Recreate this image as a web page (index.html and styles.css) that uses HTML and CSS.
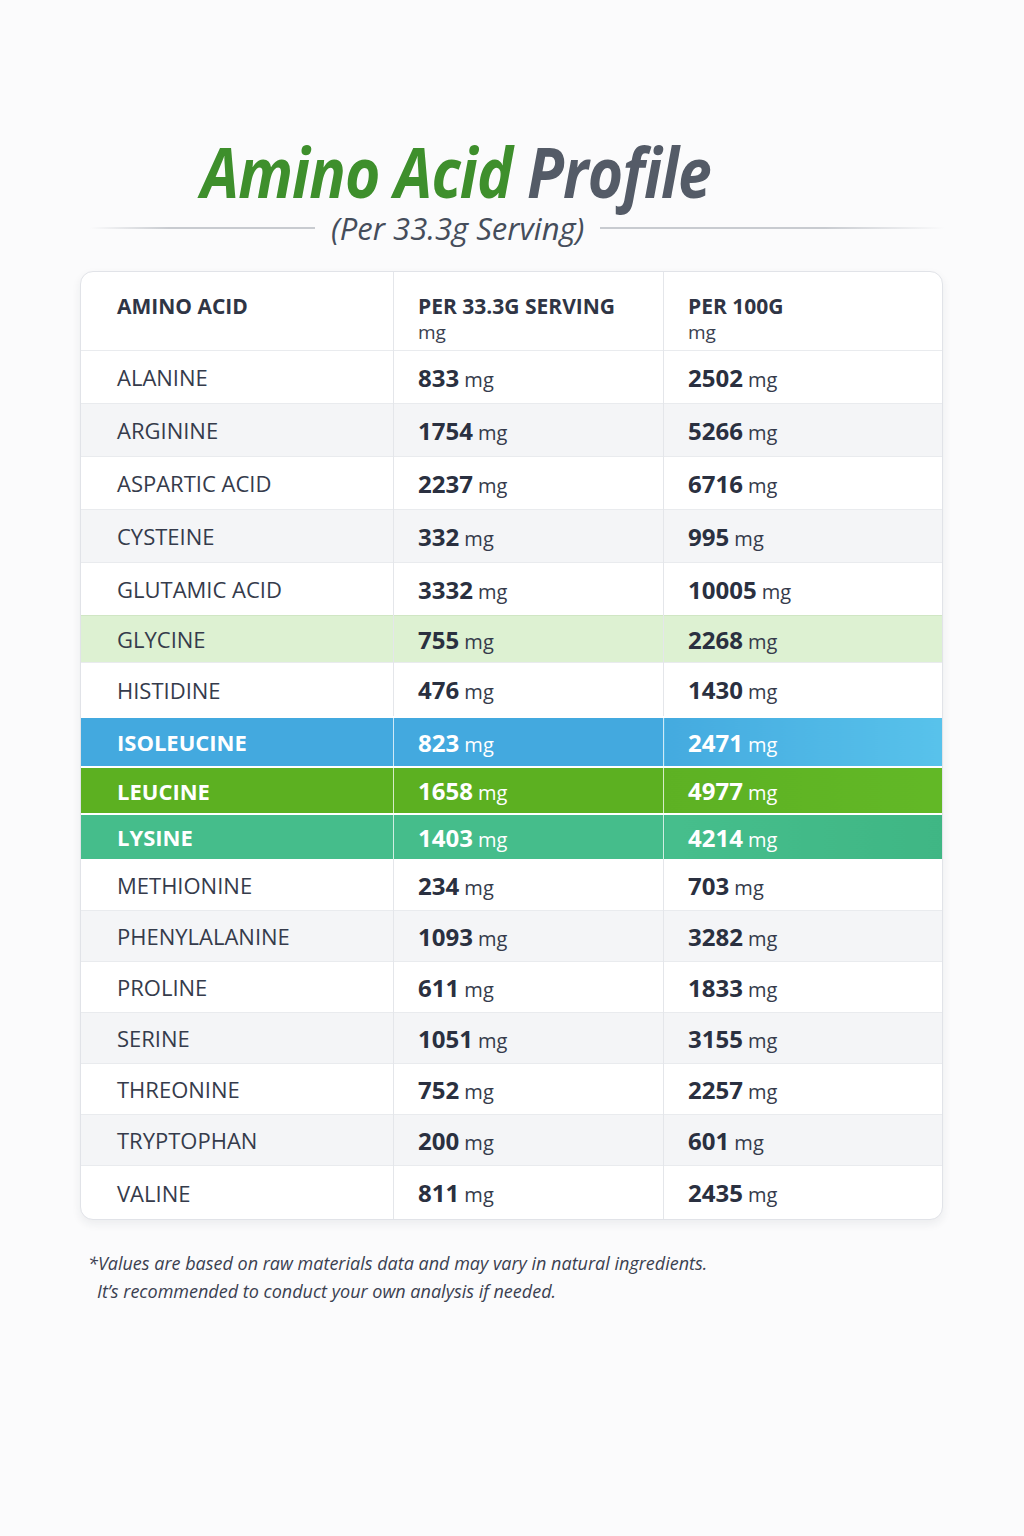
FILE: index.html
```html
<!DOCTYPE html>
<html lang="en">
<head>
<meta charset="utf-8">
<title>Amino Acid Profile</title>
<link rel="stylesheet" href="styles.css">
</head>
<body>
<main class="page">
  <header class="heading">
    <h1 class="title"><span class="green">Amino Acid</span> <span class="gray">Profile</span></h1>
    <div class="subtitle-row">
      <span class="rule rule-left"></span>
      <span class="subtitle">(Per 33.3g Serving)</span>
      <span class="rule rule-right"></span>
    </div>
  </header>

  <div class="card">
    <table class="amino">
      <thead>
        <tr>
          <th class="c1">AMINO ACID</th>
          <th class="c2">PER 33.3G SERVING<span class="unit">mg</span></th>
          <th class="c3">PER 100G<span class="unit">mg</span></th>
        </tr>
      </thead>
      <tbody>
        <tr class="top"><td>ALANINE</td><td><b>833</b> mg</td><td><b>2502</b> mg</td></tr>
        <tr class="top alt"><td>ARGININE</td><td><b>1754</b> mg</td><td><b>5266</b> mg</td></tr>
        <tr class="top"><td>ASPARTIC ACID</td><td><b>2237</b> mg</td><td><b>6716</b> mg</td></tr>
        <tr class="top alt"><td>CYSTEINE</td><td><b>332</b> mg</td><td><b>995</b> mg</td></tr>
        <tr class="top"><td>GLUTAMIC ACID</td><td><b>3332</b> mg</td><td><b>10005</b> mg</td></tr>
        <tr class="glycine"><td>GLYCINE</td><td><b>755</b> mg</td><td><b>2268</b> mg</td></tr>
        <tr class="tall"><td>HISTIDINE</td><td><b>476</b> mg</td><td><b>1430</b> mg</td></tr>
        <tr class="hl iso"><td>ISOLEUCINE</td><td><b>823</b> mg</td><td><b>2471</b> mg</td></tr>
        <tr class="hl leu"><td>LEUCINE</td><td><b>1658</b> mg</td><td><b>4977</b> mg</td></tr>
        <tr class="hl lys"><td>LYSINE</td><td><b>1403</b> mg</td><td><b>4214</b> mg</td></tr>
        <tr><td>METHIONINE</td><td><b>234</b> mg</td><td><b>703</b> mg</td></tr>
        <tr class="alt"><td>PHENYLALANINE</td><td><b>1093</b> mg</td><td><b>3282</b> mg</td></tr>
        <tr><td>PROLINE</td><td><b>611</b> mg</td><td><b>1833</b> mg</td></tr>
        <tr class="alt"><td>SERINE</td><td><b>1051</b> mg</td><td><b>3155</b> mg</td></tr>
        <tr><td>THREONINE</td><td><b>752</b> mg</td><td><b>2257</b> mg</td></tr>
        <tr class="alt"><td>TRYPTOPHAN</td><td><b>200</b> mg</td><td><b>601</b> mg</td></tr>
        <tr class="last"><td>VALINE</td><td><b>811</b> mg</td><td><b>2435</b> mg</td></tr>
      </tbody>
    </table>
  </div>

  <p class="note">*Values are based on raw materials data and may vary in natural ingredients.<br><span class="indent">It’s recommended to conduct your own analysis if needed.</span></p>
</main>
</body>
</html>
```

FILE: styles.css
```css
html, body {
  margin: 0;
  padding: 0;
}
body {
  background: #fbfbfc;
  font-family: "Open Sans", "Noto Sans", "Liberation Sans", sans-serif;
  color: #2c3242;
  width: 1024px;
  min-height: 1536px;
}
.page {
  padding: 126px 81px 0 80px;
}
.heading {
  display: flex;
  flex-direction: column;
  align-items: stretch;
}
.title {
  margin: 0 0 0 121px;
  padding-top: 9px;
  font-size: 70px;
  line-height: 72px;
  font-weight: 700;
  font-style: italic;
  letter-spacing: -1px;
  font-stretch: 92%;
  white-space: nowrap;
  transform: scaleX(0.865);
  transform-origin: left center;
}
.title .green { color: #3e8f2c; }
.title .gray { color: #545b67; }
.subtitle-row {
  display: flex;
  align-items: center;
  gap: 16px;
  margin: 4px -2px 0 10px;
  height: 34px;
}
.rule {
  height: 2px;
}
.rule-left {
  width: 225px;
  background: linear-gradient(90deg, rgba(200,203,208,0), #c8cbd0 35%, #c8cbd0);
}
.rule-right {
  flex: 1;
  background: linear-gradient(90deg, #c8cbd0, #c8cbd0 65%, rgba(200,203,208,0));
}
.subtitle {
  font-size: 31px;
  font-style: italic;
  color: #454d5b;
  font-stretch: 100%;
  white-space: nowrap;
}
.card {
  margin-top: 26px;
  background: #fff;
  border: 1.5px solid #e1e3e8;
  border-radius: 13px;
  overflow: hidden;
  box-shadow: 0 4px 10px rgba(30, 40, 60, 0.07);
}
.amino {
  width: 100%;
  border-collapse: collapse;
  table-layout: fixed;
}
.amino th, .amino td {
  text-align: left;
  padding: 0 0 0 24px;
  border-left: 1.5px solid #e4e6ea;
  border-top: 1.5px solid #e9ebee;
}
.amino th:first-child, .amino td:first-child {
  border-left: none;
  padding-left: 36px;
}
.amino .c1 { width: 276px; }
.amino .c2 { width: 245px; }
.amino th {
  border-top: none;
  height: 57px;
  vertical-align: top;
  padding-top: 21px;
  font-size: 21px;
  font-weight: 700;
  color: #2f3545;
  line-height: 26px;
  font-stretch: 96%;
}
.amino th .unit {
  display: block;
  font-weight: 400;
  font-size: 19px;
  color: #3a4050;
}
.amino td {
  height: 50px;
  font-size: 22px;
  color: #353b4b;
  font-stretch: 96%;
}
.amino td b {
  font-size: 24px;
  font-weight: 700;
  color: #2a3040;
  font-stretch: 98%;
}
.amino td + td {
  font-size: 20px;
}
.amino tr.top td { height: 52px; }
.amino tr.alt td { background: #f4f5f7; }
.amino tr.tall td { height: 53px; }
.amino tr.last td { height: 53px; }
.amino tr.glycine td {
  background: #ddf1d2;
  height: 46px;
  border-top-color: #d0e6c4;
}
.amino tr.hl td {
  color: #ffffff;
  font-weight: 700;
  border-top: 2px solid #ffffff;
  border-left: 1.5px solid rgba(255,255,255,0.75);
}
.amino tr.hl td:first-child { border-left: none; }
.amino tr.hl td b { color: #ffffff; font-weight: 700; }
.amino tr.hl td + td { font-weight: 400; }
.amino tr.iso td { height: 48px; background: #43a9df; }
.amino tr.iso td:last-child { background: linear-gradient(90deg, #44aadf, #58c2eb); }
.amino tr.leu td { height: 45px; background: #5cb021; }
.amino tr.leu td:last-child { background: linear-gradient(90deg, #5db123, #62b826); }
.amino tr.lys td { height: 44px; background: #45bd8b; }
.amino tr.lys td:last-child { background: linear-gradient(90deg, #46be8c, #3fb684); }
.amino tr.hl + tr:not(.hl) td { border-top-color: #ffffff; }
.note {
  margin: 29px 0 0 8px;
  font-size: 18px;
  line-height: 28px;
  font-style: italic;
  color: #3a4050;
  font-stretch: 92%;
}
.note .indent {
  padding-left: 9px;
}
```
